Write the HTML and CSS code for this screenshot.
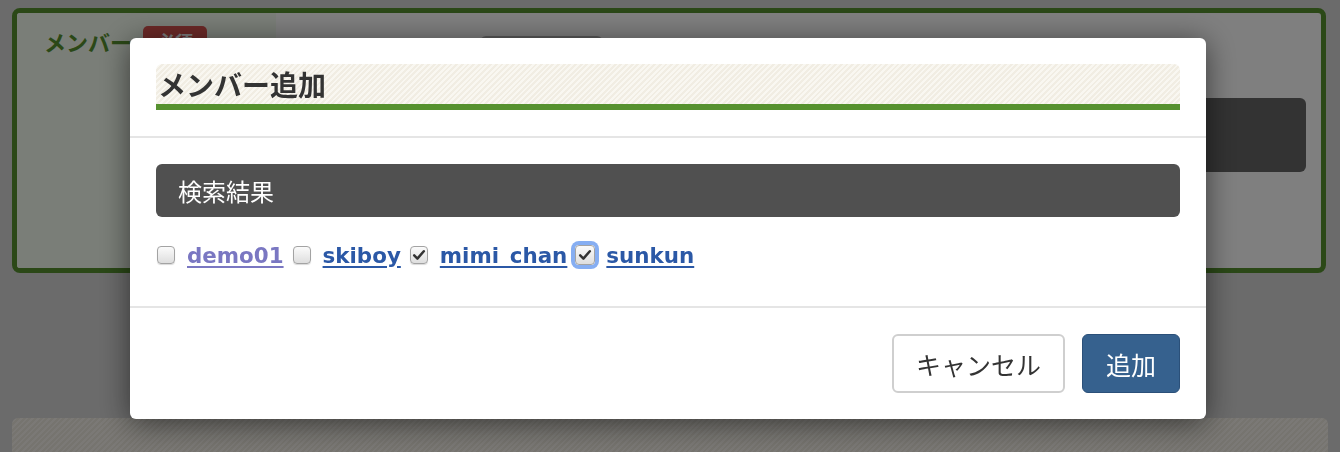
FILE: index.html
```html
<!DOCTYPE html>
<html>
<head>
  <meta charset="utf-8">
  <title>メンバー追加</title>
  <link rel="stylesheet" href="styles.css">
</head>
<body>

  <div class="page">
    <section class="panel">
      <div class="panel-side">
        <h2 class="panel-title">メンバー</h2>
        <span class="badge">必須</span>
      </div>
      <div class="panel-main">
        <button class="ghost-btn">検索</button>
        <div class="member-box"></div>
      </div>
    </section>
    <div class="stripe-panel"></div>
  </div>

  <div class="overlay">
    <div class="modal">
      <div class="modal-header">
        <h1 class="modal-title">メンバー追加</h1>
      </div>
      <div class="modal-body">
        <div class="result-bar">検索結果</div>
        <div class="result-list">
          <span class="cb"></span>
          <a class="user visited" href="#">demo01</a>
          <span class="cb"></span>
          <a class="user" href="#">skiboy</a>
          <span class="cb checked">
            <svg viewBox="0 0 18 18"><path d="M3.6 9.4 L7.2 13 L14.4 4.8" /></svg>
          </span>
          <a class="user" href="#">mimi_chan</a>
          <span class="cb checked focused">
            <svg viewBox="0 0 18 18"><path d="M3.6 9.4 L7.2 13 L14.4 4.8" /></svg>
          </span>
          <a class="user" href="#">sunkun</a>
        </div>
      </div>
      <div class="modal-footer">
        <button class="btn btn-default">キャンセル</button>
        <button class="btn btn-primary">追加</button>
      </div>
    </div>
  </div>

</body>
</html>
```

FILE: styles.css
```css
body {
  margin: 0;
  background: #d6d6d6;
  font-family: "Noto Sans CJK JP", "Noto Sans", sans-serif;
  color: #333;
  overflow: hidden;
}

/* page behind the dialog */
.panel {
  display: flex;
  box-sizing: border-box;
  height: 265px;
  margin: 8px 14px 0 12px;
  background: #fff;
  border: 5px solid #56912f;
  border-radius: 8px;
  overflow: hidden;
}
.panel-side {
  display: flex;
  align-items: center;
  align-self: stretch;
  align-content: flex-start;
  flex-wrap: wrap;
  width: 259px;
  box-sizing: border-box;
  padding: 13px 0 0 27px;
  background: #f4fdf0;
}
.panel-side > * {
  align-self: flex-start;
}
.panel-title {
  margin: 0 11px 0 0;
  font-size: 22px;
  line-height: 30px;
  font-weight: bold;
  color: #56912f;
}
.badge {
  display: inline-block;
  height: 30px;
  padding: 0 14px;
  line-height: 30px;
  font-size: 18px;
  font-weight: bold;
  color: #fff;
  background: #d9534f;
  border-radius: 5px;
}
.panel-main {
  flex: 1;
  display: flex;
  flex-direction: column;
  align-items: flex-start;
  padding: 23px 15px 0 24px;
}
.ghost-btn {
  width: 123px;
  height: 40px;
  margin-left: 180px;
  border: none;
  border-radius: 6px;
  background: #b5b5b5;
  color: #fff;
  font-size: 18px;
}
.member-box {
  align-self: stretch;
  height: 74px;
  margin-top: 22px;
  background: #666;
  border-radius: 6px;
}
.stripe-panel {
  height: 34px;
  margin: 145px 12px 0 12px;
  border-radius: 6px 6px 0 0;
  background: repeating-linear-gradient(135deg, #ece8de 0 2px, #f6f3ec 2px 4px);
}

/* dialog */
.overlay {
  position: fixed;
  inset: 0;
  background: rgba(0, 0, 0, 0.5);
}
.modal {
  width: 1076px;
  margin: 38px 0 0 130px;
  background: #fff;
  border-radius: 6px;
  box-shadow: 0 4px 30px rgba(0, 0, 0, 0.55);
}
.modal-header {
  padding: 26px;
  border-bottom: 2px solid #e5e5e5;
}
.modal-title {
  margin: 0;
  height: 40px;
  padding-left: 2px;
  line-height: 40px;
  font-size: 28px;
  font-weight: bold;
  color: #333;
  border-radius: 6px 6px 0 0;
  border-bottom: 6px solid #56912f;
  background: repeating-linear-gradient(135deg, #f1ede3 0 2px, #f9f7f1 2px 4px);
}
.modal-body {
  padding: 26px 26px 37px;
  border-bottom: 2px solid #e5e5e5;
}
.result-bar {
  height: 53px;
  padding: 0 22px;
  line-height: 53px;
  font-size: 24px;
  color: #fff;
  background: #505050;
  border-radius: 6px;
}
.result-list {
  display: flex;
  align-items: center;
  height: 28px;
  margin-top: 24px;
  padding-left: 1px;
}
.cb {
  display: inline-flex;
  align-items: center;
  justify-content: center;
  box-sizing: border-box;
  width: 18px;
  height: 18px;
  margin-right: 12px;
  border: 1px solid #a3a3a3;
  border-radius: 4px;
  background: linear-gradient(#fbfbfb, #dedede);
  box-shadow: 0 1px 1px rgba(0, 0, 0, 0.15);
}
.cb svg {
  width: 16px;
  height: 16px;
}
.cb path {
  fill: none;
  stroke: #333;
  stroke-width: 2.8;
  stroke-linecap: round;
  stroke-linejoin: round;
}
.cb.focused {
  width: 20px;
  height: 20px;
  margin-left: -1px;
  margin-right: 11px;
  box-shadow: 0 0 0 4px #86aef2;
}
.user {
  margin-right: 9px;
  font-family: "DejaVu Sans", "Noto Sans", sans-serif;
  font-size: 21.4px;
  font-weight: bold;
  color: #2b58a6;
  text-decoration: underline;
  text-decoration-thickness: 2px;
  text-underline-offset: 3px;
}
.user.visited {
  color: #7a77c2;
}
.modal-footer {
  display: flex;
  justify-content: flex-end;
  gap: 17px;
  padding: 26px;
}
.btn {
  height: 59px;
  font-family: "Noto Sans CJK JP", "Noto Sans", sans-serif;
  font-size: 25px;
  border-radius: 6px;
}
.btn-default {
  padding: 0 22px;
  color: #333;
  background: #fff;
  border: 2px solid #cfcfcf;
}
.btn-primary {
  padding: 0 23px;
  color: #fff;
  background: #36618e;
  border: 1px solid #2b5079;
}
```
